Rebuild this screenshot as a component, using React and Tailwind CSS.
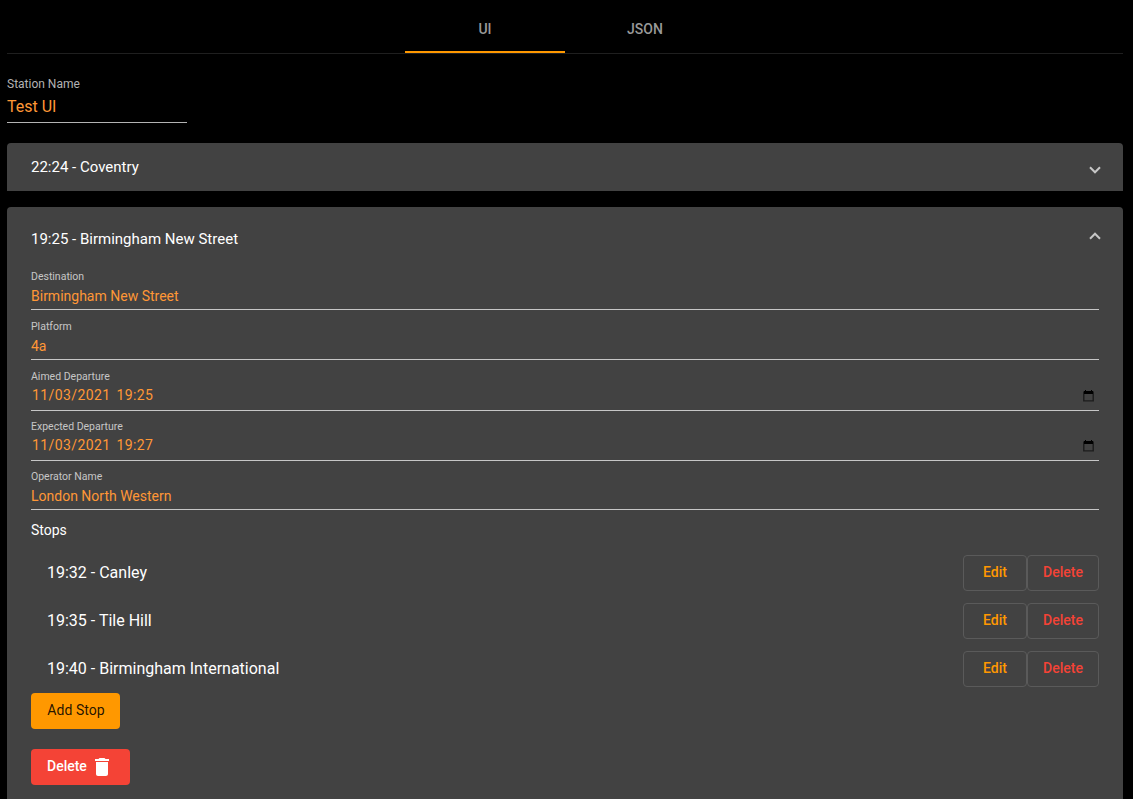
const fields = [
  { label: 'Destination', value: 'Birmingham New Street' },
  { label: 'Platform', value: '4a' },
  { label: 'Aimed Departure', date: ['11/03/2021', '19:25'] },
  { label: 'Expected Departure', date: ['11/03/2021', '19:27'] },
  { label: 'Operator Name', value: 'London North Western' },
];

const stops = ['19:32 - Canley', '19:35 - Tile Hill', '19:40 - Birmingham International'];

function Chevron({ up }) {
  return (
    <svg width="12" height="8" viewBox="0 0 12 8" fill="none" stroke="#c7c7c7" strokeWidth="2">
      <path d={up ? 'M1 6.7 6 1.7 11 6.7' : 'M1 1.3 6 6.3 11 1.3'} />
    </svg>
  );
}

function CalendarIcon() {
  return (
    <svg width="11" height="12" viewBox="0 0 11 12">
      <path fill="none" stroke="#1c1c1c" strokeWidth="1.4" d="M.8 1.5v9.4h9.4V1.500" />
      <path fill="#000" d="M2 0h1v1h5V0h1v1h1v3H1V1h1z" />
    </svg>
  );
}

function Field({ label, value, date }) {
  return (
    <div className="h-[50px]">
      <div className={`border-b border-[#c6c6c6] ${date ? 'h-[43px]' : 'h-[42px]'}`}>
        <div className="h-4 pt-px text-[10.5px] leading-4 text-[#c6c6c6]">{label}</div>
        {date ? (
          <div className="flex h-[22px] items-center justify-between pl-px pr-[5px] text-sm text-[#ff9736]">
            <div className="flex gap-1.5 tracking-[0.4px]">
              <span>{date[0]}</span>
              <span>{date[1]}</span>
            </div>
            <div className="pt-px"><CalendarIcon /></div>
          </div>
        ) : (
          <div className="h-6 text-sm leading-6 text-[#ff9736]">{value}</div>
        )}
      </div>
    </div>
  );
}

export default function App() {
  return (
    <div className="h-[799px] overflow-hidden bg-black pl-[7px] pr-[10px] font-['Roboto',sans-serif] text-white">
      <div className="flex h-[54px] justify-center border-b border-[#1f1f1f]">
        <div className="h-[53px] w-40 border-b-2 border-[#ff9800] pt-[5px] text-center text-sm font-medium leading-[48px] text-[#999]">UI</div>
        <div className="h-[53px] w-40 pt-[5px] text-center text-sm font-medium leading-[48px] text-[#999]">JSON</div>
      </div>

      <div className="mt-[22px] h-[47px] w-[180px] border-b border-[#b3b3b3]">
        <div className="text-xs leading-4 text-[#b3b3b3]">Station Name</div>
        <div className="text-base leading-[30px] text-[#ff9736]">Test UI</div>
      </div>

      <div className="mt-5 flex h-12 items-center justify-between rounded-t bg-[#424242] pl-6 pr-[22px] text-[15px]">
        <span>22:24 - Coventry</span>
        <span className="pt-[5px]"><Chevron /></span>
      </div>

      <div className="mt-4 h-[620px] rounded-t bg-[#424242] px-6">
        <div className="-mr-0.5 flex h-[61px] items-center justify-between pt-[3px] text-[15px]">
          <span>19:25 - Birmingham New Street</span>
          <span className="pb-1.5"><Chevron up /></span>
        </div>

        {fields.map((field) => <Field key={field.label} {...field} />)}

        <div className="h-[31px] text-sm leading-6">Stops</div>
        {stops.map((stop) => (
          <div key={stop} className="flex h-12 items-center justify-between pl-4 text-base">
            <span>{stop}</span>
            <div className="flex text-sm font-medium leading-[34px]">
              <button className="h-9 w-16 rounded border border-[#5a5a5a] pb-0.5 leading-8 text-[#ff9800]">Edit</button>
              <button className="h-9 w-[72px] rounded border border-[#5a5a5a] pb-0.5 leading-8 text-[#f44336]">Delete</button>
            </div>
          </div>
        ))}

        <button className="block h-9 w-[89px] rounded bg-[#ff9800] pb-0.5 pl-px text-sm leading-[34px] tracking-[0.04px] text-black/87">Add Stop</button>
        <button className="mt-5 flex h-9 w-[99px] items-center rounded bg-[#f44336] pl-4 text-sm font-medium">
          <span className="pb-0.5">Delete</span>
          <svg className="ml-[3.5px]" width="24" height="24" viewBox="0 0 24 24" fill="white">
            <path d="M6 19c0 1.1.9 2 2 2h8c1.1 0 2-.9 2-2V7H6v12zM19 4h-3.500l-1-1h-5l-1 1H5v2h14V4z" />
          </svg>
        </button>
      </div>
    </div>
  );
}
